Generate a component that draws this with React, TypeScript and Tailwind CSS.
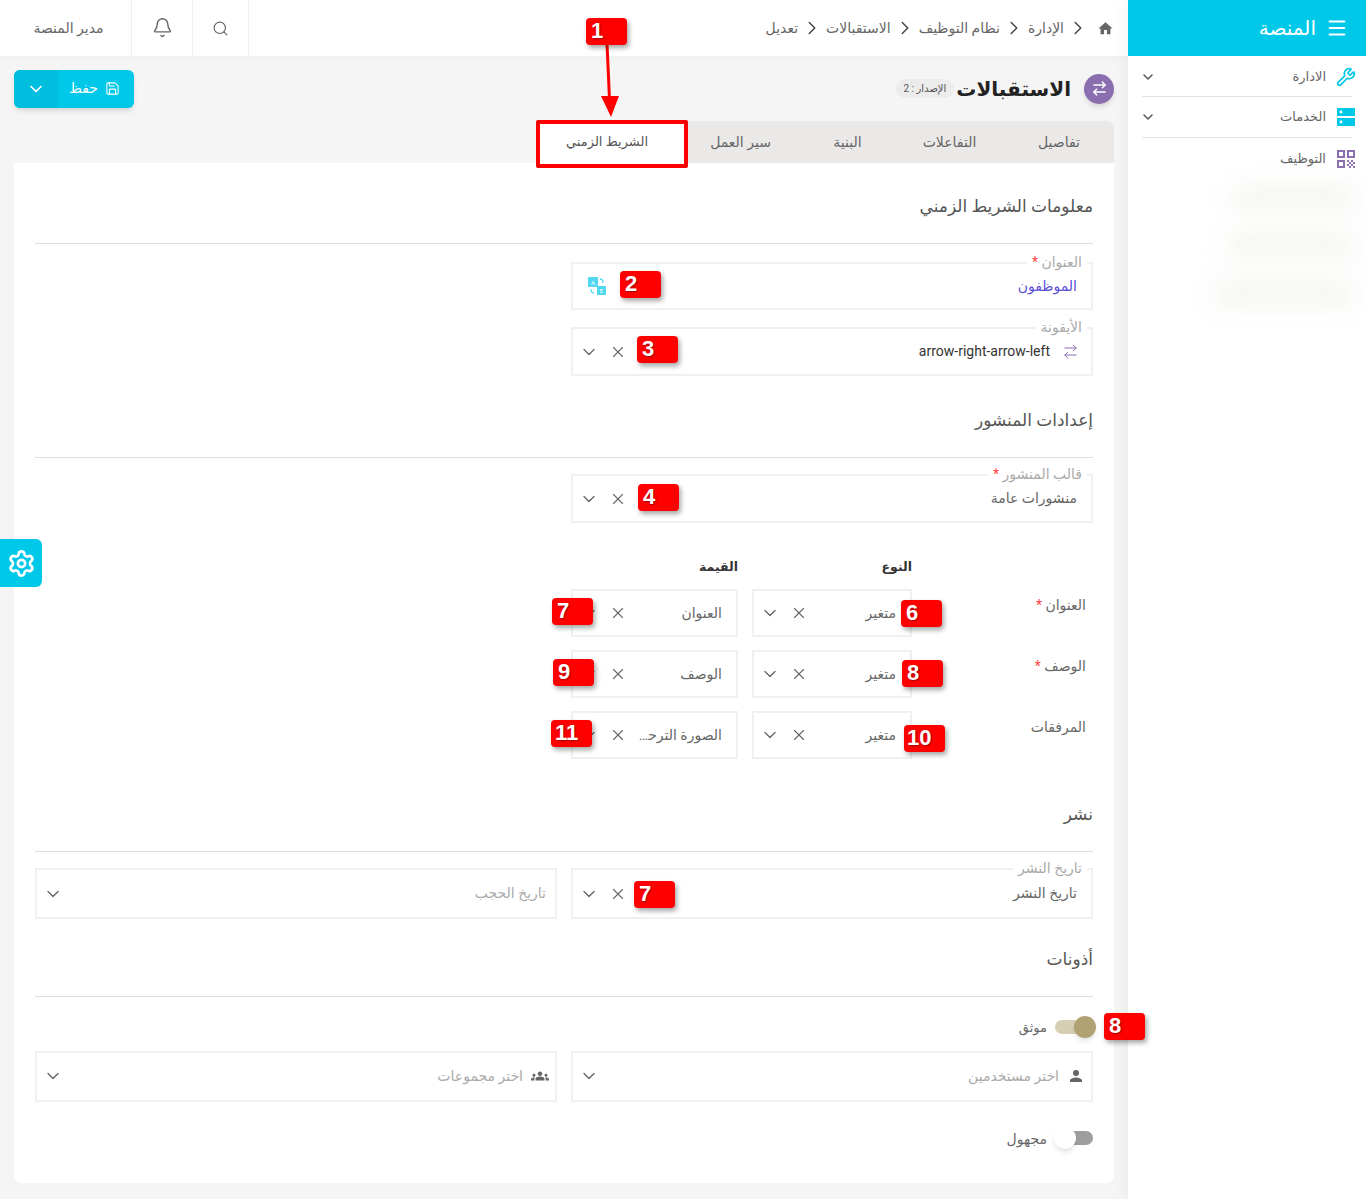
import { ArrowRightLeft, Bell, ChevronDown, ChevronRight, Menu, Save, Search, Settings, Wrench, X } from 'lucide-react';
import type { ReactNode } from 'react';

const FONT = "font-['Roboto','DejaVu_Sans',sans-serif]";

function Section({ title, children }: { title: string; children: ReactNode }) {
  return (
    <section>
      <h2 className="h-[81px] pt-[31px] border-b border-[#dedede] text-[17px] leading-[24px] text-[#555]">{title}</h2>
      {children}
    </section>
  );
}

function Field({ label, required, children, className = 'h-[50px]' }: { label?: string; required?: boolean; children: ReactNode; className?: string }) {
  return (
    <div className={`relative flex items-center border-2 border-[#f0f0f0] ${className}`}>
      {label && (
        <span className="absolute -top-[10px] right-[4px] bg-white px-[5px] text-[14px] leading-[16px] text-[#aaa]">
          {label} {required && <span className="text-[#f44]">*</span>}
        </span>
      )}
      {children}
    </div>
  );
}

function SelectControls({ clear = true }: { clear?: boolean }) {
  return (
    <div className="mr-auto flex items-center gap-[10px] pl-[6px] text-[#666] flex-row-reverse">
      <ChevronDown size={20} strokeWidth={1.6} />
      {clear && <X size={18} strokeWidth={1.5} />}
    </div>
  );
}

function MapRow({ label, required, value }: { label: string; required?: boolean; value: string }) {
  return (
    <>
      <div className="pr-[7px] pt-[6px] text-[14px] leading-[20px] text-[#666]">
        {label} {required && <span className="text-[#f44]">*</span>}
      </div>
      <Field className="h-[48px]">
        <span className="pr-[14px] text-[14px] text-[#666]">متغير</span>
        <SelectControls />
      </Field>
      <Field className="h-[48px]">
        <span className="max-w-[98px] truncate pr-[14px] text-[14px] text-[#666]">{value}</span>
        <SelectControls />
      </Field>
    </>
  );
}

function Toggle({ on }: { on?: boolean }) {
  return (
    <span dir="ltr" className={`relative block h-[14px] w-[38px] -translate-y-[1px] rounded-full ${on ? 'bg-[#d6cfb4]' : 'bg-[#9e9e9e]'}`}>
      <span
        className={`absolute -top-[4px] h-[22px] w-[22px] rounded-full shadow-md ${on ? '-right-[3px] bg-[#b0a272]' : '-left-[1px] bg-white'}`}
      />
    </span>
  );
}

function Badge({ text, className }: { text: string; className: string }) {
  return (
    <div
      dir="ltr"
      className={`absolute z-20 h-[27px] w-[41px] rounded-[4px] bg-[#ff0000] text-left font-['Liberation_Sans',sans-serif] text-[22px] font-bold leading-[26px] text-white shadow-[2px_3px_5px_rgba(0,0,0,0.35)] [text-shadow:1px_1px_2px_rgba(0,0,0,0.4)] ${className}`}
    >
      {text}
    </div>
  );
}

function TranslateIcon() {
  return (
    <svg width="20" height="20" viewBox="0 0 20 20" className="ml-[5px]">
      <rect x="1" y="1" width="10" height="10" rx="1" fill="#4fd8ee" />
      <rect x="10" y="10" width="9" height="9" rx="1" fill="#4fd8ee" />
      <path d="M13 3c2 0 3 1 3 4M7 17c-2 0-3-1-3-4" stroke="#4fd8ee" strokeWidth="1.3" fill="none" />
      <text x="6" y="8.500" fontSize="6" fill="#fff" textAnchor="middle">A</text>
      <text x="14.500" y="17" fontSize="6" fill="#fff" textAnchor="middle">E</text>
    </svg>
  );
}

function Sidebar() {
  return (
    <aside className="relative z-10 w-[238px] shrink-0 bg-white shadow-[-4px_0_12px_rgba(0,0,0,0.04)]">
      <div className="flex h-[56px] items-center gap-[10px] bg-[#00c8e8] pr-[18px] text-[20px] text-white">
        <Menu size={22} strokeWidth={2.2} />
        <span>المنصة</span>
      </div>
      <div className="px-[14px] pt-[1px]">
        <div className="flex h-[40px] items-center border-b border-[#e2e2e2] text-[13px] text-[#666]">
          <Wrench size={20} strokeWidth={2} className="-mr-[4px] ml-[10px] text-[#00c8e8]" />
          <span>الادارة</span>
          <ChevronDown size={16} strokeWidth={2.2} className="-ml-[2px] mr-auto text-[#555]" />
        </div>
        <div className="flex h-[41px] items-center border-b border-[#e2e2e2] text-[13px] text-[#666]">
          <svg width="20" height="20" viewBox="0 0 20 20" className="-mr-[4px] ml-[10px]">
            <path d="M1 1h18v8H1zM1 11h18v8H1z" fill="#00c8e8" />
            <circle cx="5" cy="5" r="1.400" fill="#fff" />
            <circle cx="5" cy="15" r="1.400" fill="#fff" />
          </svg>
          <span>الخدمات</span>
          <ChevronDown size={16} strokeWidth={2.2} className="-ml-[2px] mr-auto text-[#555]" />
        </div>
        <div className="flex h-[42px] items-center text-[13px] text-[#666]">
          <svg width="20" height="20" viewBox="0 0 20 20" className="-mr-[4px] ml-[10px]">
            <g fill="none" stroke="#8a6eb0" strokeWidth="2">
              <rect x="2" y="2" width="6" height="6" />
              <rect x="12" y="2" width="6" height="6" />
              <rect x="2" y="12" width="6" height="6" />
            </g>
            <path d="M11 11h2v2h-2zM15 11h2v2h-2zM13 13h2v2h-2zM17 13h2v2h-2zM11 15h2v2h-2zM15 15h2v2h-2zM13 17h2v2h-2zM17 17h2v2h-2z" fill="#8a6eb0" />
          </svg>
          <span>التوظيف</span>
        </div>
      </div>
      <div className="mt-[7px] flex flex-col items-start gap-[26px] pr-[12px] blur-md">
        <div className="h-[22px] w-[120px] bg-[#f3f4ef]" />
        <div className="h-[22px] w-[126px] bg-[#f3f4ef]" />
        <div className="h-[22px] w-[140px] bg-[#f3f4ef]" />
      </div>
    </aside>
  );
}

function Header() {
  const crumbs = ['الإدارة', 'نظام التوظيف', 'الاستقبالات', 'تعديل'];
  return (
    <header className="relative flex h-[56px] items-center bg-white shadow-[0_2px_10px_rgba(0,0,0,0.03)]">
      <div className="flex items-center pr-[14px] text-[14px] text-[#666]">
        <svg width="17" height="17" viewBox="0 0 24 24" fill="#666" className="ml-[5px]"><path d="M10 20v-6h4v6h5v-8h3L12 3 2 12h3v8z" /></svg>
        {crumbs.map((c) => (
          <span key={c} className="flex items-center">
            <ChevronRight size={22} strokeWidth={1.6} className="mx-[3px] text-[#444]" />
            {c}
          </span>
        ))}
      </div>
      <div className="mr-auto flex h-full items-center text-[#666]">
        <div className="flex h-full w-[57px] items-center justify-center border-x border-[#eee]"><Search size={17} strokeWidth={1.6} /></div>
        <div className="flex h-full w-[60px] items-center justify-center"><Bell size={21} strokeWidth={1.6} className="-translate-y-[1px]" /></div>
        <div className="flex h-full w-[132px] items-center justify-center border-r border-[#eee] pl-[6px] text-[14px]">مدير المنصة</div>
      </div>
    </header>
  );
}

export default function App() {
  return (
    <div dir="rtl" className={`relative flex h-[1199px] w-full overflow-hidden bg-[#f5f5f5] ${FONT}`}>
      <Sidebar />
      <main className="flex min-w-0 flex-1 flex-col">
        <Header />
        <div className="px-[14px]">
          <div className="flex h-[65px] items-center">
            <span className="flex h-[30px] w-[30px] items-center justify-center rounded-full bg-[#8a6eb0] text-white shadow-md">
              <ArrowRightLeft size={17} strokeWidth={2} />
            </span>
            <h1 className="mr-[13px] text-[20px] font-bold text-[#222]">الاستقبالات</h1>
            <span className="mr-[2px] rounded-full bg-[#ececec] px-[8px] py-[2px] text-[10px] text-[#555]">الإصدار : 2</span>
            <button className="mr-auto flex h-[38px] w-[120px] items-center overflow-hidden rounded-[6px] bg-[#00c8e8] text-[14px] text-white shadow-md">
              <span className="flex flex-1 items-center gap-[7px] pr-[14px]"><Save size={15} strokeWidth={1.7} />حفظ</span>
              <span className="flex h-full w-[44px] items-center justify-center bg-[#00bedd]"><ChevronDown size={20} strokeWidth={2} /></span>
            </button>
          </div>

          <div className="flex h-[42px] w-fit items-stretch rounded-tr-[8px] bg-[#ebe9e8] pr-[3px] text-[14px] text-[#666]">
            <div className="flex w-[104px] items-center justify-center">تفاصيل</div>
            <div className="flex w-[115px] items-center justify-center">التفاعلات</div>
            <div className="flex w-[89px] items-center justify-center">البنية</div>
            <div className="flex w-[119px] items-center justify-center pr-[6px]">سير العمل</div>
            <div className="flex w-[144px] items-center justify-center bg-white pr-[10px] text-[13px] text-[#555]">الشريط الزمني</div>
          </div>

          <div className="h-[1020px] rounded-b-[8px] bg-white px-[21px]">
            <Section title="معلومات الشريط الزمني">
              <div className="mt-[18px] grid w-[522px] gap-[17px] pb-[1px]">
                <Field label="العنوان" required className="h-[48px]">
                  <span className="pr-[14px] text-[14px] text-[#5b4fd6]">الموظفون</span>
                  <span className="mr-auto pl-[9px]"><TranslateIcon /></span>
                </Field>
                <Field label="الأيقونة" className="h-[49px]">
                  <ArrowRightLeft size={17} strokeWidth={1.4} className="mr-[12px] text-[#8a6eb0]" />
                  <span className="mr-[12px] text-[14px] text-[#333]">arrow-right-arrow-left</span>
                  <SelectControls />
                </Field>
              </div>
            </Section>

            <Section title="إعدادات المنشور">
              <div className="mt-[16px] w-[522px]">
                <Field label="قالب المنشور" required className="h-[49px]">
                  <span className="pr-[14px] text-[14px] text-[#666]">منشورات عامة</span>
                  <SelectControls />
                </Field>
                <div className="mt-[35px] grid grid-cols-[167px_160px_167px] gap-x-[14px] gap-y-[13px]">
                  <div />
                  <div className="text-[12.5px] font-bold leading-[18px] text-[#333]">النوع</div>
                  <div className="text-[12.5px] font-bold leading-[18px] text-[#333]">القيمة</div>
                  <MapRow label="العنوان" required value="العنوان" />
                  <MapRow label="الوصف" required value="الوصف" />
                  <MapRow label="المرفقات" value="الصورة الترحيبية" />
                </div>
              </div>
            </Section>

            <div className="mt-[12px]">
              <Section title="نشر">
                <div className="mt-[16px] grid grid-cols-2 gap-[14px]">
                  <Field label="تاريخ النشر" className="h-[51px]">
                    <span className="pr-[14px] text-[14px] text-[#666]">تاريخ النشر</span>
                    <SelectControls />
                  </Field>
                  <Field className="h-[51px]">
                    <span className="pr-[9px] text-[14px] text-[#aaa]">تاريخ الحجب</span>
                    <SelectControls clear={false} />
                  </Field>
                </div>
              </Section>
            </div>

            <div className="-mt-[3px]">
              <Section title="أذونات">
                <div className="mt-[21px] flex items-center gap-[8px] text-[13px] text-[#666]">
                  <Toggle on />
                  <span>موثق</span>
                </div>
                <div className="mt-[13px] grid grid-cols-2 gap-[14px]">
                  <Field className="h-[51px]">
                    <svg width="18" height="18" viewBox="0 0 24 24" fill="#666" className="mr-[6px]"><path d="M12 12a4 4 0 1 0 0-8 4 4 0 0 0 0 8zm0 2c-2.700 0-8 1.300-8 4v2h16v-2c0-2.700-5.300-4-8-4z" /></svg>
                    <span className="mr-[8px] text-[14px] text-[#aaa]">اختر مستخدمين</span>
                    <SelectControls clear={false} />
                  </Field>
                  <Field className="h-[51px]">
                    <svg width="18" height="18" viewBox="0 0 24 24" fill="#666" className="mr-[6px]"><path d="M12 12.750c1.600 0 3.100.4 4.300.9 1.100.5 1.700 1.600 1.700 2.700V18H6v-1.600c0-1.200.7-2.300 1.700-2.700 1.200-.6 2.700-1 4.300-1zM4 13c1.100 0 2-.9 2-2s-.9-2-2-2-2 .9-2 2 .9 2 2 2zm1.100 1.100C4.800 14 4.400 14 4 14c-1 0-1.900.2-2.800.6C.5 14.900 0 15.600 0 16.400V18h4.500v-1.600c0-.8.2-1.600.6-2.300zM20 13c1.100 0 2-.9 2-2s-.9-2-2-2-2 .9-2 2 .9 2 2 2zm4 3.400c0-.8-.5-1.500-1.200-1.800-.9-.4-1.800-.6-2.800-.6-.4 0-.8 0-1.100.1.4.7.6 1.500.6 2.300V18H24v-1.600zM12 6c1.700 0 3 1.300 3 3s-1.300 3-3 3-3-1.300-3-3 1.300-3 3-3z" /></svg>
                    <span className="mr-[8px] text-[14px] text-[#aaa]">اختر مجموعات</span>
                    <SelectControls clear={false} />
                  </Field>
                </div>
                <div className="mt-[27px] flex items-center gap-[8px] text-[14px] text-[#666]">
                  <Toggle />
                  <span>مجهول</span>
                </div>
              </Section>
            </div>
          </div>
        </div>
      </main>

      {/* settings tab, floats over the page */}
      <div className="absolute left-0 top-[539px] z-20 flex h-[48px] w-[42px] items-center justify-center rounded-r-[6px] bg-[#00c8e8] text-white">
        <Settings size={29} strokeWidth={2.2} />
      </div>

      {/* red annotations */}
      <div className="absolute left-[536px] top-[120px] h-[48px] w-[152px] rounded-[2px] border-[4px] border-[#ff0000]" />
      <svg width="30" height="75" viewBox="0 0 30 75" className="absolute left-[595px] top-[44px]">
        <path d="M12 0l2.500 55" stroke="#ff0000" strokeWidth="3" fill="none" />
        <path d="M6 52h18l-8 21z" fill="#ff0000" />
      </svg>
      <Badge text="1" className="left-[586px] top-[18px] pl-[5px]" />
      <Badge text="2" className="left-[620px] top-[271px] pl-[5px]" />
      <Badge text="3" className="left-[637px] top-[336px] pl-[5px]" />
      <Badge text="4" className="left-[638px] top-[484px] pl-[5px]" />
      <Badge text="6" className="left-[901px] top-[600px] pl-[5px]" />
      <Badge text="7" className="left-[552px] top-[598px] pl-[5px]" />
      <Badge text="8" className="left-[902px] top-[660px] pl-[5px]" />
      <Badge text="9" className="left-[553px] top-[659px] pl-[5px]" />
      <Badge text="10" className="left-[904px] top-[725px] pl-[3px]" />
      <Badge text="11" className="left-[551px] top-[720px] pl-[4px]" />
      <Badge text="7" className="left-[634px] top-[881px] pl-[5px]" />
      <Badge text="8" className="left-[1104px] top-[1013px] pl-[5px]" />
    </div>
  );
}
